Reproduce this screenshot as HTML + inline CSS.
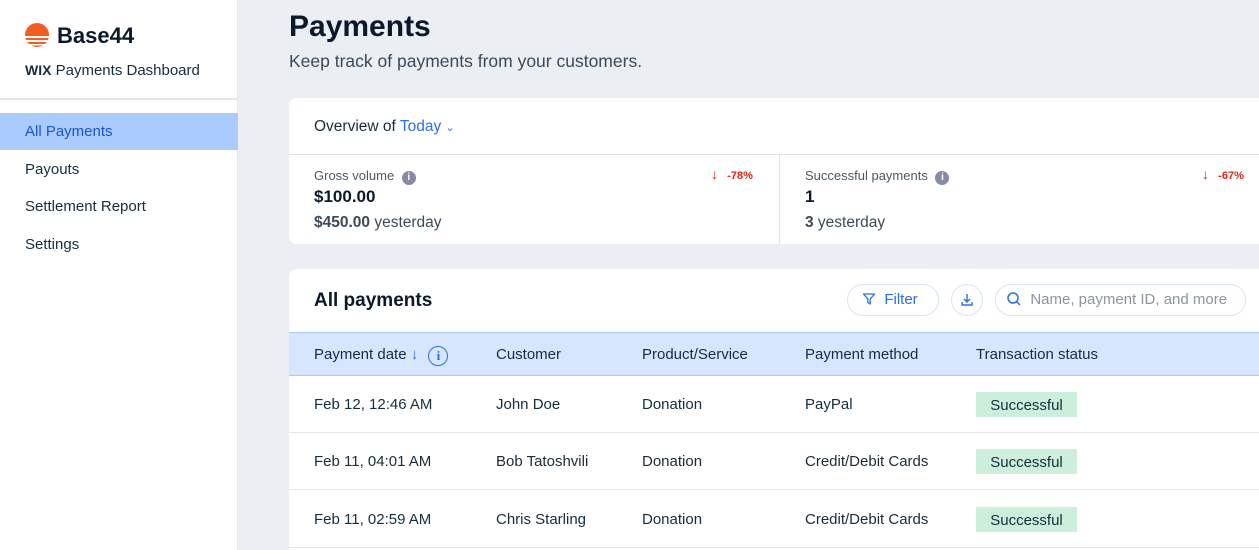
<!DOCTYPE html>
<html><head><style>
*{margin:0;padding:0;box-sizing:border-box}
html,body{width:1259px;height:550px;overflow:hidden}
body{background:#ebeef3;font-family:"Liberation Sans",sans-serif;color:#162d3d;position:relative}
.sb{position:absolute;left:0;top:0;width:238px;height:550px;background:#fff;border-right:1px solid #e3e6ea}
.abs{position:absolute;white-space:nowrap}
.nav{position:absolute;left:0;width:238px;height:37px;padding-left:25px;line-height:37px;font-size:15px;color:#162d3d}
.card{position:absolute;background:#fff;border-radius:8px}
.hdr{position:absolute;left:289px;top:332px;width:970px;height:44px;background:#d6e6fe;border-top:1px solid #a8c9fb;border-bottom:1px solid #a8c9fb}
.row{position:absolute;left:289px;width:970px;height:57px;background:#fff;border-bottom:1px solid #e3e6ea;font-size:15px}
.row span{position:absolute;top:20px}
.badge{position:absolute;left:687px;top:16px;width:101px;height:25px;background:#cdeedb;color:#162d3d;text-align:center;line-height:27px;font-size:15px}
.th{position:absolute;top:13px;font-size:15px}
</style></head><body>
<div class="sb">
 <svg class="abs" style="left:24px;top:22px" width="26" height="26" viewBox="0 0 26 26"><defs><clipPath id="c"><circle cx="13" cy="13" r="12"/></clipPath></defs><g clip-path="url(#c)" fill="#f45d22"><rect x="0" y="0" width="26" height="14"/><rect x="0" y="16" width="26" height="2"/><rect x="0" y="20" width="26" height="2"/><rect x="0" y="23.5" width="26" height="3"/></g></svg>
 <div class="abs" style="left:57px;top:23px;font-size:22px;font-weight:bold;color:#0b1a2a">Base44</div>
 <div class="abs" style="left:25px;top:62px;font-size:15px;color:#162d3d"><b style="font-size:14px">WIX</b> Payments Dashboard</div>
 <div style="position:absolute;left:0;top:98px;width:238px;border-top:2px solid #e3e6ea"></div>
 <div class="nav" style="top:113px;background:#a9cbfd;color:#1a56c8">All Payments</div>
 <div class="nav" style="top:151px">Payouts</div>
 <div class="nav" style="top:188px">Settlement Report</div>
 <div class="nav" style="top:226px">Settings</div>
</div>
<div class="abs" style="left:289px;top:10px;font-size:30px;font-weight:bold;color:#0b1a2a">Payments</div>
<div class="abs" style="left:289px;top:51px;font-size:17.5px;color:#3b4a5a">Keep track of payments from your customers.</div>

<div class="card" style="left:289px;top:98px;width:980px;height:146px"></div>
<div class="abs" style="left:314px;top:118px;font-size:15.5px">Overview of <span style="color:#2b6fe6">Today</span> <span style="color:#2b6fe6;font-size:11px">&#8964;</span></div>
<div style="position:absolute;left:289px;top:154px;width:970px;border-top:1px solid #dfe3e8"></div>
<div style="position:absolute;left:779px;top:155px;height:89px;border-left:1px solid #dfe3e8"></div>

<div class="abs" style="left:314px;top:168px;font-size:13px;color:#4a5867">Gross volume <span style="display:inline-block;width:14px;height:14px;border-radius:50%;background:#868aa5;color:#fff;font-size:10px;text-align:center;line-height:14px;font-weight:bold;margin-left:4px">i</span></div>
<div class="abs" style="left:711px;top:166px;font-size:11px;color:#e62214;font-weight:bold"><span style="font-size:14px;font-weight:normal">&#8595;</span>&nbsp;&nbsp;&nbsp;-78%</div>
<div class="abs" style="left:314px;top:187px;font-size:17px;font-weight:bold;color:#0b1a2a">$100.00</div>
<div class="abs" style="left:314px;top:214px;font-size:15.5px;color:#3b4a5a"><b>$450.00</b> yesterday</div>

<div class="abs" style="left:805px;top:168px;font-size:13px;color:#4a5867">Successful payments <span style="display:inline-block;width:14px;height:14px;border-radius:50%;background:#868aa5;color:#fff;font-size:10px;text-align:center;line-height:14px;font-weight:bold;margin-left:4px">i</span></div>
<div class="abs" style="left:1202px;top:166px;font-size:11px;color:#e62214;font-weight:bold"><span style="font-size:14px;font-weight:normal">&#8595;</span>&nbsp;&nbsp;&nbsp;-67%</div>
<div class="abs" style="left:805px;top:187px;font-size:17px;font-weight:bold;color:#0b1a2a">1</div>
<div class="abs" style="left:805px;top:214px;font-size:15.5px;color:#3b4a5a"><b>3</b> yesterday</div>

<div class="card" style="left:289px;top:269px;width:980px;height:300px"></div>
<div class="abs" style="left:314px;top:290px;font-size:19px;font-weight:bold;color:#0b1a2a">All payments</div>
<div class="abs" style="left:847px;top:284px;width:92px;height:32px;border:1px solid #d6e4fb;border-radius:16px;color:#2b6fe6;font-size:15px;line-height:30px;padding-left:14px"><svg width="14" height="14" viewBox="0 0 14 14" style="vertical-align:-2px"><path d="M1.5 2h11l-4.3 5v5l-2.4-1.5V7z" fill="none" stroke="#2b6fe6" stroke-width="1.3" stroke-linejoin="round"/></svg>&nbsp;&nbsp;Filter</div>
<div class="abs" style="left:951px;top:284px;width:32px;height:32px;border:1px solid #d6e4fb;border-radius:16px"><svg width="30" height="30" viewBox="0 0 30 30"><path d="M15 9v8M12 14l3 3 3-3M10 17v3h10v-3" fill="none" stroke="#2b6fe6" stroke-width="1.4"/></svg></div>
<div class="abs" style="left:995px;top:284px;width:251px;height:32px;border:1px solid #d6e4fb;border-radius:16px;font-size:15px;color:#8a95a3;line-height:30px;padding-left:10px"><svg width="16" height="16" viewBox="0 0 16 16" style="vertical-align:-3px"><circle cx="7" cy="7" r="5" fill="none" stroke="#2b6fe6" stroke-width="1.5"/><path d="M10.5 10.5l3.5 3.5" stroke="#2b6fe6" stroke-width="1.5"/></svg>&nbsp;&nbsp;Name, payment ID, and more</div>

<div class="hdr">
 <div class="th" style="left:25px">Payment date <span style="color:#2b6fe6">&#8595;</span> <span style="display:inline-block;width:20px;height:20px;border:1.5px solid #2b6fe6;border-radius:50%;color:#2b6fe6;text-align:center;line-height:17px;font-size:13px;font-weight:bold;font-family:'Liberation Serif',serif;margin-left:6px;vertical-align:-1px">i</span></div>
 <div class="th" style="left:207px">Customer</div>
 <div class="th" style="left:353px">Product/Service</div>
 <div class="th" style="left:516px">Payment method</div>
 <div class="th" style="left:687px">Transaction status</div>
</div>
<div class="row" style="top:376px"><span style="left:25px">Feb 12, 12:46 AM</span><span style="left:207px">John Doe</span><span style="left:353px">Donation</span><span style="left:516px">PayPal</span><div class="badge">Successful</div></div>
<div class="row" style="top:433px"><span style="left:25px">Feb 11, 04:01 AM</span><span style="left:207px">Bob Tatoshvili</span><span style="left:353px">Donation</span><span style="left:516px">Credit/Debit Cards</span><div class="badge">Successful</div></div>
<div class="row" style="top:491px"><span style="left:25px">Feb 11, 02:59 AM</span><span style="left:207px">Chris Starling</span><span style="left:353px">Donation</span><span style="left:516px">Credit/Debit Cards</span><div class="badge">Successful</div></div>
</body></html>
